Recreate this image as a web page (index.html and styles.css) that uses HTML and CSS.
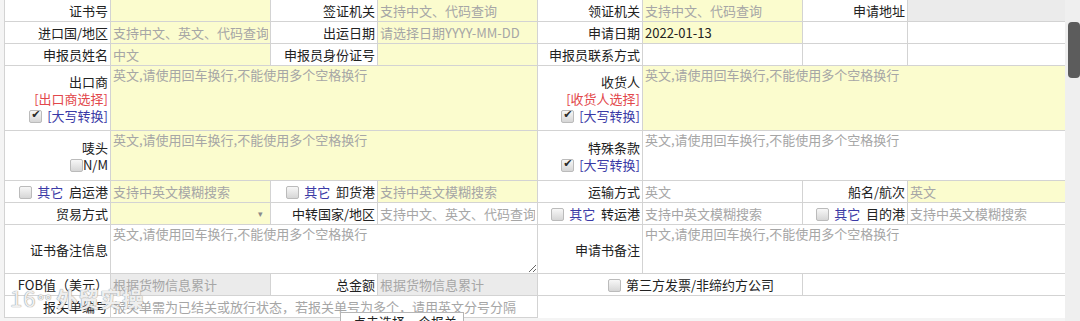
FILE: index.html
```html
<!DOCTYPE html>
<html>
  <head>
    <title>申请书</title>
    <link rel="stylesheet" href="styles.css">
  </head>
  <body>
    <div class="page">
      <div class="sheet">
        <table class="form">
          <colgroup>
            <col style="width:106px"><col style="width:160px"><col style="width:107px"><col style="width:160px">
            <col style="width:105px"><col style="width:160px"><col style="width:105px"><col style="width:158px">
          </colgroup>
          <tr class="r1">
            <th>证书号</th>
            <td class="y"><input class="field" type="text"></td>
            <th>签证机关</th>
            <td class="y"><input class="field" type="text" placeholder="支持中文、代码查询"></td>
            <th>领证机关</th>
            <td class="y"><input class="field" type="text" placeholder="支持中文、代码查询"></td>
            <th>申请地址</th>
            <td class="g"></td>
          </tr>
          <tr>
            <th>进口国/地区</th>
            <td class="y"><input class="field" type="text" placeholder="支持中文、英文、代码查询"></td>
            <th>出运日期</th>
            <td class="y"><input class="field" type="text" placeholder="请选择日期YYYY-MM-DD"></td>
            <th>申请日期</th>
            <td class="y"><input class="field" type="text" value="2022-01-13"></td>
            <td></td>
            <td></td>
          </tr>
          <tr>
            <th>申报员姓名</th>
            <td class="y"><input class="field" type="text" placeholder="中文"></td>
            <th>申报员身份证号</th>
            <td class="y"><input class="field" type="text"></td>
            <th>申报员联系方式</th>
            <td></td>
            <td></td>
            <td></td>
          </tr>
          <tr class="r4">
            <th class="multi">
              出口商<br>
              <a class="pick">[出口商选择]</a><br>
              <input class="check" type="checkbox" checked> <a class="upper">[大写转换]</a>
            </th>
            <td class="y" colspan="3"><textarea class="area">英文,请使用回车换行,不能使用多个空格换行</textarea></td>
            <th class="multi">
              收货人<br>
              <a class="pick">[收货人选择]</a><br>
              <input class="check" type="checkbox" checked> <a class="upper">[大写转换]</a>
            </th>
            <td class="y" colspan="3"><textarea class="area">英文,请使用回车换行,不能使用多个空格换行</textarea></td>
          </tr>
          <tr class="r5">
            <th class="multi">
              唛头<br>
              <input class="check small" type="checkbox">N/M
            </th>
            <td class="y" colspan="3"><textarea class="area">英文,请使用回车换行,不能使用多个空格换行</textarea></td>
            <th class="multi">
              特殊条款<br>
              <input class="check" type="checkbox" checked> <a class="upper">[大写转换]</a>
            </th>
            <td colspan="3"><textarea class="area">英文,请使用回车换行,不能使用多个空格换行</textarea></td>
          </tr>
          <tr>
            <th><input class="check" type="checkbox"> <a class="other">其它</a>&nbsp; 启运港</th>
            <td class="y"><input class="field" type="text" placeholder="支持中英文模糊搜索"></td>
            <th><input class="check" type="checkbox"> <a class="other">其它</a>&nbsp; 卸货港</th>
            <td class="y"><input class="field" type="text" placeholder="支持中英文模糊搜索"></td>
            <th>运输方式</th>
            <td><input class="field" type="text" placeholder="英文"></td>
            <th>船名/航次</th>
            <td class="y"><input class="field" type="text" placeholder="英文"></td>
          </tr>
          <tr>
            <th>贸易方式</th>
            <td class="y"><div class="select"><span class="arrow">&#9662;</span></div></td>
            <th>中转国家/地区</th>
            <td><input class="field" type="text" placeholder="支持中文、英文、代码查询"></td>
            <th><input class="check" type="checkbox"> <a class="other">其它</a>&nbsp; 转运港</th>
            <td><input class="field" type="text" placeholder="支持中英文模糊搜索"></td>
            <th><input class="check" type="checkbox"> <a class="other">其它</a>&nbsp; 目的港</th>
            <td><input class="field" type="text" placeholder="支持中英文模糊搜索"></td>
          </tr>
          <tr class="r8">
            <th>证书备注信息</th>
            <td colspan="3"><textarea class="area resize" placeholder="英文,请使用回车换行,不能使用多个空格换行"></textarea></td>
            <th>申请书备注</th>
            <td colspan="3"><textarea class="area" placeholder="中文,请使用回车换行,不能使用多个空格换行"></textarea></td>
          </tr>
          <tr>
            <th>FOB值（美元）</th>
            <td class="g"><input class="field" type="text" placeholder="根据货物信息累计"></td>
            <th>总金额</th>
            <td class="g"><input class="field" type="text" placeholder="根据货物信息累计"></td>
            <th colspan="2" class="third"><input class="check" type="checkbox"> 第三方发票/非缔约方公司</th>
            <td colspan="2"></td>
          </tr>
          <tr class="r10">
            <th>报关单编号</th>
            <td colspan="3"><input class="field" type="text" placeholder="报关单需为已结关或放行状态，若报关单号为多个，请用英文分号分隔"></td>
            <td colspan="4" class="blank"></td>
          </tr>
        </table>
      </div>
      <div class="scroll"><div class="thumb"></div></div>

      <div class="mark"><span class="mark-num">16</span><span class="mark-dots">°°</span>外贸实操</div>
      <div class="popup">点击选择一个报关单</div>
    </div>
  </body>
</html>
```

FILE: styles.css
```css
body {
  margin: 0;
  background-color: #f4f4f4;
  font-family: "Noto Sans CJK SC", "Noto Sans", sans-serif;
  font-size: 13px;
  color: #222;
}

.page {
  position: relative;
  display: flex;
  width: 1080px;
  height: 321px;
  overflow: hidden;
}

.sheet {
  width: 1061px;
  height: 318px;
  margin-left: 4px;
  background-color: #fff;
}

.form {
  width: 1061px;
  margin-top: -1px;
  border-collapse: collapse;
  table-layout: fixed;
}

.form th,
.form td {
  height: 21px;
  padding: 0;
  border: 1px solid #d3d3d3;
  vertical-align: middle;
}

.form th {
  padding-right: 2px;
  font-weight: normal;
  text-align: right;
  white-space: nowrap;
  line-height: 17px;
}

.form td.y {
  background-color: #fbfcce;
}

.form td.g {
  background-color: #ebebeb;
}

.form td.blank {
  border-right: none;
  border-bottom: none;
}

.r4 th, .r4 td { height: 64px; }
.r5 th, .r5 td { height: 49px; }
.r8 th, .r8 td { height: 48px; }

.field {
  display: block;
  width: 100%;
  height: 21px;
  margin: 0;
  padding: 0 2px;
  box-sizing: border-box;
  border: none;
  outline: none;
  background: transparent;
  font: inherit;
  color: #222;
}

.area {
  display: block;
  width: 100%;
  margin: 0;
  padding: 0 2px;
  box-sizing: border-box;
  border: none;
  outline: none;
  background: transparent;
  font: inherit;
  line-height: 17px;
  color: #a6a6a6;
  resize: none;
}

.r4 .area { height: 64px; }
.r5 .area { height: 49px; }
.r8 .area { height: 48px; }

.area.resize {
  resize: both;
}

.field::placeholder,
.area::placeholder {
  color: #a6a6a6;
}

.pick {
  color: #e2474b;
}

.upper,
.other {
  color: #3a3aa6;
}

.check {
  appearance: none;
  -webkit-appearance: none;
  position: relative;
  width: 13px;
  height: 13px;
  margin: 0 2px 0 0;
  vertical-align: -2px;
  border: 1px solid #bbb;
  border-radius: 2px;
  background: linear-gradient(#f7f7f7, #d6d6d6);
}

.check:checked::after {
  content: "\2714";
  position: absolute;
  left: 1px;
  top: -3px;
  font-family: "DejaVu Sans", sans-serif;
  font-size: 11px;
  color: #2a2a2a;
}

.check.small {
  margin-right: 0;
}

.third {
  padding-right: 28px !important;
}

.select {
  display: flex;
  justify-content: flex-end;
  align-items: center;
  height: 21px;
  padding-right: 7px;
}

.arrow {
  font-size: 9px;
  color: #8a8a8a;
}

.scroll {
  flex: 1;
  background-color: #efefef;
}

.thumb {
  width: 12px;
  height: 56px;
  margin: 22px 0 0 3px;
  border-radius: 4px;
  background-color: #5c5c5c;
}

/* watermark and popup lie over the form */
.mark {
  position: absolute;
  left: 10px;
  top: 281px;
  font-size: 21px;
  font-weight: bold;
  color: rgba(255, 255, 255, 0.85);
  text-shadow: 0 0 1px #999, 0 0 1px #999;
  letter-spacing: 1px;
}

.mark-num {
  font-weight: normal;
  font-size: 22px;
}

.mark-dots {
  margin: 0 4px 0 1px;
  font-size: 16px;
}

.popup {
  position: absolute;
  left: 340px;
  top: 312px;
  width: 124px;
  height: 20px;
  padding-left: 12px;
  box-sizing: border-box;
  border: 1px solid #b5b5b5;
  background-color: #fff;
  line-height: 18px;
  color: #222;
}
```
